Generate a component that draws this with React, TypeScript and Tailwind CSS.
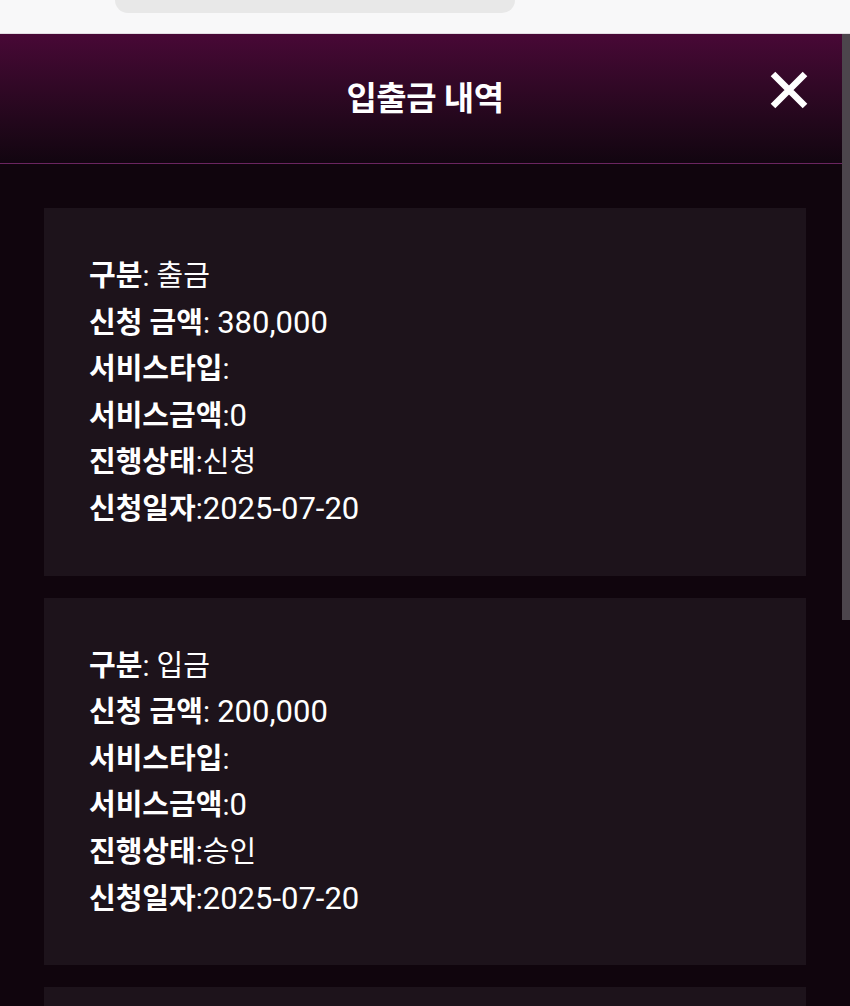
const records = [
  { type: "출금", amount: "380,000", serviceType: "", serviceAmount: "0", status: "신청", date: "2025-07-20" },
  { type: "입금", amount: "200,000", serviceType: "", serviceAmount: "0", status: "승인", date: "2025-07-20" },
];

function Row({ label, value, gap }: { label: string; value: string; gap?: boolean }) {
  // hangul runs a touch narrower than the digits in the shot
  const isNum = /^[0-9,\-]*$/.test(value);
  return (
    <div>
      <span className="text-[29px] font-bold">{label}</span>
      <span className="text-[29px]">:{gap ? " " : ""}</span>
      <span className={isNum ? "text-[31px]" : "text-[29px]"}>{value}</span>
    </div>
  );
}

function RecordCard({ r }: { r: (typeof records)[number] }) {
  return (
    <div className="bg-[#1d131b] px-[45px] pt-[45px] pb-[43px] text-[29px] leading-[46.6px] text-white">
      <Row label="구분" value={r.type} gap />
      <Row label="신청 금액" value={r.amount} gap />
      <Row label="서비스타입" value={r.serviceType} />
      <Row label="서비스금액" value={r.serviceAmount} />
      <Row label="진행상태" value={r.status} />
      <Row label="신청일자" value={r.date} />
    </div>
  );
}

export default function App() {
  return (
    <div
      className="relative h-[1006px] w-[850px] overflow-hidden bg-[#10050d]"
      style={{ fontFamily: "Roboto, 'Noto Sans CJK KR', sans-serif" }}
    >
      {/* Browser chrome strip */}
      <div className="flex h-[34px] border-b border-[#e2dde2] bg-[#f8f8f9]">
        <div className="ml-[115px] h-[13px] w-[400px] rounded-b-[14px] bg-[#e8e8e8]" />
      </div>

      {/* Header */}
      <div className="relative flex h-[130px] items-center justify-center border-b border-[#6b2560] bg-gradient-to-b from-[#480836] to-[#120510]">
        <h1 className="text-[33px] font-bold tracking-[-0.5px] text-white">입출금 내역</h1>
        <button className="absolute right-[42px] top-[37px] text-white">
          <svg width="38" height="38" viewBox="0 0 38 38" fill="none" stroke="currentColor" strokeWidth="6.5" strokeLinecap="butt">
            <path d="M3 3 L35 35 M35 3 L3 35" />
          </svg>
        </button>
      </div>

      {/* List */}
      <div className="flex flex-col gap-[22px] px-[44px] pt-[44px]">
        {records.map((r, i) => (
          <RecordCard key={i} r={r} />
        ))}
        <div className="h-[60px] bg-[#1d131b]" />
      </div>

      {/* Scrollbar overlay */}
      <div className="absolute right-0 top-[34px] h-[586px] w-[8px] bg-[#4c454c]" />
    </div>
  );
}
